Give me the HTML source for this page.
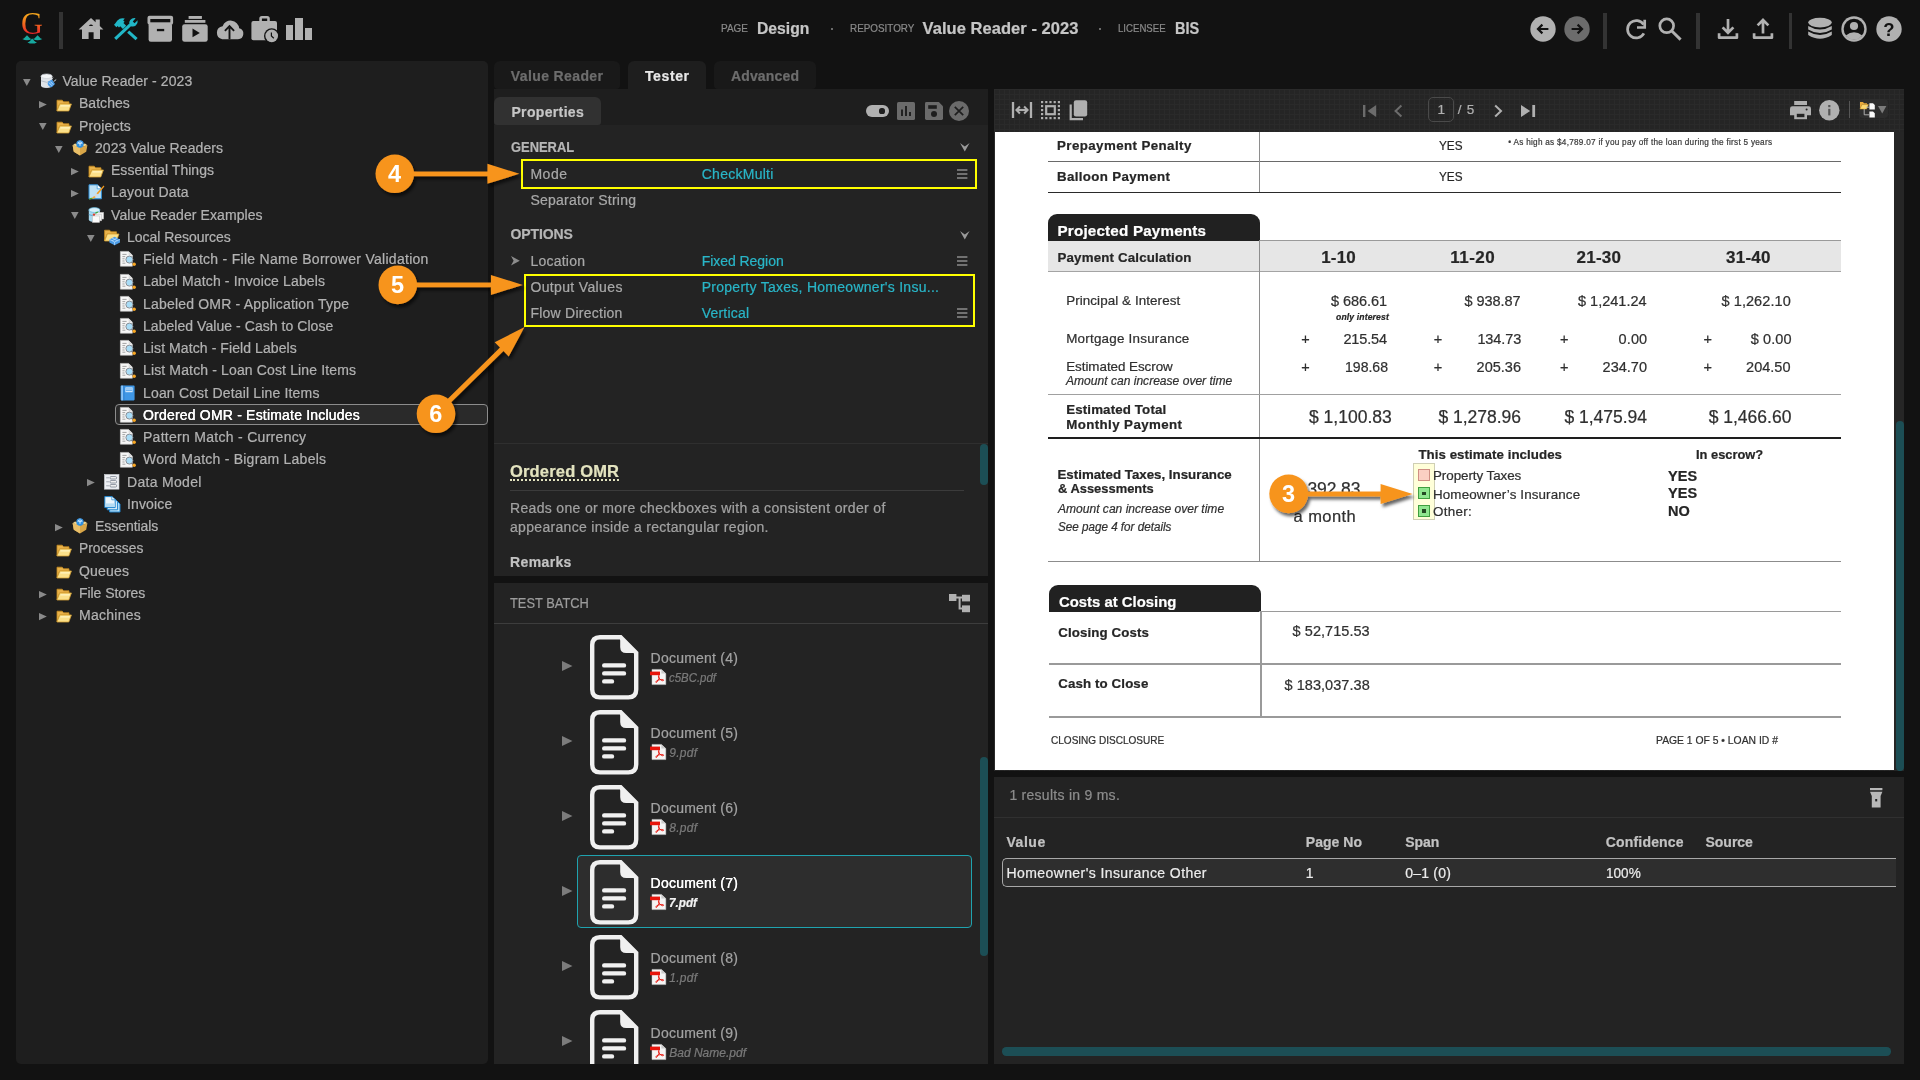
<!DOCTYPE html>
<html>
<head>
<meta charset="utf-8">
<title>Design</title>
<style>
*{box-sizing:border-box;margin:0;padding:0}
html,body{width:1920px;height:1080px;overflow:hidden;background:#121212;font-family:"Liberation Sans",sans-serif;color:#b4b4b4}
#root{position:relative;width:1920px;height:1080px;overflow:hidden;will-change:transform}
#root div,#root span,#root svg{position:absolute}
#root svg{overflow:visible}
.t{white-space:pre;line-height:1}
.t{-webkit-text-stroke:.22px currentColor}

</style>
</head>
<body>
<div id="root">
<span class="t" style="left:21.2px;top:8.5px;font-family:'Liberation Serif',serif;font-size:30.8px;line-height:1;-webkit-text-stroke:0;transform:scaleX(.985);transform-origin:0 0;background:linear-gradient(180deg,#f6a51c 20%,#f2631f 52%,#e8212b 84%);-webkit-background-clip:text;background-clip:text;color:transparent;">G</span>
<svg style="left:21px;top:34px;" width="23" height="10" viewBox="0 0 23 10"><g fill="#17a89f"><path d="M1.2 5.0 C3.8 4.6 4.6 2.2 6.0 1.2 C7.4 2.2 8.2 4.6 10.799999999999999 5.0 Q6.0 7.3999999999999995 1.2 5.0Z"/><path d="M11.8 5.0 C14.4 4.6 15.200000000000001 2.2 16.6 1.2 C18.0 2.2 18.8 4.6 21.4 5.0 Q16.6 7.3999999999999995 11.8 5.0Z"/><path d="M6.4 8.4 C9.0 8 9.8 5.6 11.2 4.6 C12.600000000000001 5.6 13.4 8 16.0 8.4 Q11.2 10.8 6.4 8.4Z"/></g></svg>
<div style="left:59px;top:12px;width:4px;height:37px;background:#333;"></div>
<svg style="left:78px;top:17px;" width="26" height="23" viewBox="0 0 26 23"><path fill="#b1b1b1" d="M13 1 L17.6 5.2 V2.4 H21.8 V9.1 L25.4 12.4 H22 V22 H15.6 V15.3 H10.6 V22 H4 V12.4 H0.6 Z"/><path fill="#121212" d="M10.8 8.9 Q13 6.3 15.2 8.9 Z"/></svg>
<svg style="left:113px;top:17px;" width="26" height="24" viewBox="0 0 26 24"><g fill="none" stroke="#21b7c7" stroke-width="3.1"><path d="M2.2 21.8 L17.4 7.6"/><path d="M15.2 14.6 L23.6 22.2"/></g><path fill="#21b7c7" d="M17.2 3.0 Q19.4 0.6 22.6 1.2 L19.8 4.4 L21.6 6.2 L24.6 3.2 Q25.2 6.6 22.8 8.6 Q20.6 10.2 17.8 9.2 L16.4 7.6 Q15.6 5 17.2 3.0Z"/><path fill="#21b7c7" d="M4.4 3.4 Q7.6 0.2 11.8 1.6 L10.2 3.4 L11.6 4.8 L10.4 6 L13.2 8.8 L10 12 L7.2 9.2 L6 10.4 L4.6 9 L3.4 10.2 L1 7.8 L2.2 6.6 Z"/></svg>
<svg style="left:147px;top:15px;" width="27" height="28" viewBox="0 0 27 28"><rect x="0.5" y="0.8" width="25.6" height="9" rx="2" fill="#b1b1b1"/><rect x="1.6" y="8" width="23.4" height="18.8" rx="2.2" fill="#b1b1b1"/><rect x="3.3" y="4" width="20" height="3.3" fill="#121212"/><rect x="9.9" y="13.9" width="7.3" height="2.3" fill="#121212"/></svg>
<svg style="left:182px;top:15px;" width="27" height="28" viewBox="0 0 27 28"><rect x="6.6" y="1" width="13.3" height="2.9" fill="#b1b1b1"/><rect x="2.8" y="5" width="20.6" height="2.8" fill="#b1b1b1"/><rect x="0.2" y="9.2" width="25.5" height="17.6" rx="2.4" fill="#b1b1b1"/><path d="M10.5 13.4 L17.8 17.9 L10.5 22.3Z" fill="#121212"/></svg>
<svg style="left:215px;top:18px;" width="30" height="22" viewBox="0 0 30 22"><path fill="#b1b1b1" d="M7.2 21.2 H23 A5.6 5.6 0 0 0 24.2 10.2 A8.6 8.6 0 0 0 7.6 8.2 A6.6 6.6 0 0 0 7.2 21.2Z"/><path d="M14.5 21.2 V9.8 M9.9 12.9 L14.5 8.2 L19.1 12.9" fill="none" stroke="#121212" stroke-width="1.9"/></svg>
<svg style="left:251px;top:15px;" width="29" height="29" viewBox="0 0 29 29"><path fill="none" stroke="#b1b1b1" stroke-width="2.6" d="M9.6 7 V3.6 Q9.6 2.3 10.9 2.3 H16.2 Q17.5 2.3 17.5 3.6 V7"/><rect x="0.4" y="6.1" width="25.6" height="19.1" rx="2" fill="#b1b1b1"/><circle cx="20.7" cy="20.9" r="7.7" fill="#121212"/><circle cx="20.7" cy="20.9" r="6.3" fill="#b1b1b1"/><path d="M20.4 17.4 V21 L22.8 23.2" fill="none" stroke="#121212" stroke-width="1.2"/></svg>
<div style="left:286px;top:25.2px;width:7.3px;height:15px;background:#b1b1b1;"></div>
<div style="left:295.2px;top:17.9px;width:7.5px;height:22.3px;background:#b1b1b1;"></div>
<div style="left:304.8px;top:28px;width:7.2px;height:12.2px;background:#b1b1b1;"></div>
<span class="t" style="left:721.00px;top:23.47px;font-size:11.5px;color:#8a8a8a;transform:scaleX(0.8679);transform-origin:0 0;">PAGE</span>
<span class="t" style="left:757.20px;top:19.83px;font-size:16.5px;color:#c6c6c6;font-weight:700;transform:scaleX(0.9525);transform-origin:0 0;">Design</span>
<div style="left:830.6px;top:27.6px;width:2.6px;height:2.6px;background:#8a8a8a;border-radius:50%"></div>
<span class="t" style="left:850.20px;top:23.47px;font-size:11.5px;color:#8a8a8a;transform:scaleX(0.8587);transform-origin:0 0;">REPOSITORY</span>
<span class="t" style="left:922.60px;top:19.83px;font-size:16.5px;color:#c6c6c6;font-weight:700;letter-spacing:0.044px;">Value Reader - 2023</span>
<div style="left:1098.8px;top:27.6px;width:2.6px;height:2.6px;background:#8a8a8a;border-radius:50%"></div>
<span class="t" style="left:1118.40px;top:23.47px;font-size:11.5px;color:#8a8a8a;transform:scaleX(0.8367);transform-origin:0 0;">LICENSEE</span>
<span class="t" style="left:1175.20px;top:19.83px;font-size:16.5px;color:#c6c6c6;font-weight:700;transform:scaleX(0.8795);transform-origin:0 0;">BIS</span>
<svg style="left:1529.9px;top:15.899999999999999px;" width="26" height="26" viewBox="0 0 26 26"><circle cx="13" cy="13" r="12.7" fill="#b1b1b1"/><path d="M18.4 13 H8.2 M12.4 8.6 L8 13 L12.4 17.4" fill="none" stroke="#121212" stroke-width="2.2"/></svg>
<svg style="left:1564.2px;top:15.899999999999999px;" width="26" height="26" viewBox="0 0 26 26"><circle cx="13" cy="13" r="12.7" fill="#6c6c6c"/><path d="M7.6 13 H17.8 M13.6 8.6 L18 13 L13.6 17.4" fill="none" stroke="#121212" stroke-width="2.2"/></svg>
<div style="left:1603.3px;top:12.5px;width:3.5px;height:36.5px;background:#333;"></div>
<svg style="left:1623.6px;top:17.8px;" width="24" height="24" viewBox="0 0 24 24"><path d="M19.6 6.6 A8.7 8.7 0 1 0 19.9 15.4" fill="none" stroke="#b1b1b1" stroke-width="2.7"/><path d="M20.7 1.8 V9.5 H13" fill="none" stroke="#b1b1b1" stroke-width="2.7"/></svg>
<svg style="left:1658px;top:17px;" width="25" height="24" viewBox="0 0 25 24"><circle cx="8.7" cy="8.8" r="6.9" fill="none" stroke="#b1b1b1" stroke-width="2.7"/><path d="M13.6 13.8 L22.6 22.6" stroke="#b1b1b1" stroke-width="2.9"/></svg>
<div style="left:1696px;top:12.5px;width:3.5px;height:36.5px;background:#333;"></div>
<svg style="left:1717px;top:18px;" width="23" height="22" viewBox="0 0 23 22"><g fill="none" stroke="#b1b1b1" stroke-width="2.7" stroke-linejoin="round"><path d="M11 1 V14.2 M5.6 9.4 L11 14.8 L16.4 9.4" stroke-linejoin="miter"/><path d="M2.1 15.2 V19.7 H19.9 V15.2"/></g></svg>
<svg style="left:1752px;top:18px;" width="23" height="22" viewBox="0 0 23 22"><g fill="none" stroke="#b1b1b1" stroke-width="2.7" stroke-linejoin="round"><path d="M11 15.6 V2 M5.6 7.4 L11 2 L16.4 7.4" stroke-linejoin="miter"/><path d="M2.1 15.2 V19.7 H19.9 V15.2"/></g></svg>
<div style="left:1788.6px;top:12.5px;width:3.5px;height:36.5px;background:#333;"></div>
<svg style="left:1807px;top:17px;" width="26" height="24" viewBox="0 0 26 24"><g fill="#b1b1b1"><ellipse cx="13" cy="5.6" rx="11.8" ry="4.8"/><path d="M1.2 9 Q13 16 24.8 9 V12.4 Q13 19.6 1.2 12.4Z"/><path d="M1.2 14.6 Q13 21.6 24.8 14.6 V18 Q13 25.6 1.2 18Z"/></g></svg>
<svg style="left:1841.4px;top:15.899999999999999px;" width="26" height="26" viewBox="0 0 26 26"><circle cx="13" cy="13" r="12.7" fill="#b1b1b1"/><circle cx="13" cy="13" r="10.3" fill="#121212"/><circle cx="13" cy="10" r="4.1" fill="#b1b1b1"/><path d="M4.8 19.4 Q13 13.2 21.2 19.4 Q17.6 23.6 13 23.6 Q8.4 23.6 4.8 19.4Z" fill="#b1b1b1"/></svg>
<svg style="left:1876px;top:15.899999999999999px;" width="26" height="26" viewBox="0 0 26 26"><circle cx="13" cy="13" r="12.7" fill="#b1b1b1"/><text x="13" y="19.6" text-anchor="middle" font-family="Liberation Sans" font-weight="700" font-size="18.5" fill="#121212">?</text></svg>
<div style="left:16px;top:61px;width:472px;height:1003px;background:#1e1e1e;border-radius:5px"></div>
<svg style="left:23.3px;top:78.8px;" width="9" height="8" viewBox="0 0 9 8"><path d="M0 0 H7.6 L3.8 7Z" fill="#8a8a8a"/></svg>
<svg style="left:39.8px;top:73.29999999999998px;" width="16.4" height="16.4" viewBox="0 0 16.4 16.4"><path d="M1 3.2 V12.6 Q1 15 6.6 15 Q12.2 15 12.2 12.6 V3.2Z" fill="#dfe3e8"/><ellipse cx="6.6" cy="3.2" rx="5.6" ry="2.3" fill="#f3f5f7" stroke="#c3c9d0" stroke-width=".6"/><path d="M1 7.8 Q6.6 10.8 12.2 7.8" fill="none" stroke="#aab2bb" stroke-width=".8"/><path d="M8.2 8.6 L12 6.6 L15 11 L11.8 14.2 Q8.6 14 7.6 11Z" fill="#4a9be6"/><path d="M9 9.6 L12 12.8 M10.4 8.6 L13.2 11.6" stroke="#bfe0ff" stroke-width=".9"/><path d="M13.6 8.6 L16.2 6.6 M11.6 6.4 L13 4.6 M7.8 13.4 L6 15" stroke="#cfd4da" stroke-width="1"/></svg>
<span class="t" style="left:62.40px;top:74.05px;font-size:14px;color:#b2b2b2;letter-spacing:0.09px;">Value Reader - 2023</span>
<svg style="left:38.9px;top:101.14999999999999px;" width="9" height="9" viewBox="0 0 9 9"><path d="M0 0 L7.8 3.6 L0 7.2Z" fill="#8a8a8a"/></svg>
<svg style="left:55.8px;top:96.54999999999998px;" width="16.4" height="16.4" viewBox="0 0 16.4 16.4"><path d="M1 3.2 H6.2 L7.6 4.8 H13 V7 H3.6 L1 13.6Z" fill="#e9b24a" stroke="#c58a1e" stroke-width=".8"/><path d="M3.8 7 H15.4 L12.8 14 H1Z" fill="#fbe08a" stroke="#d7a233" stroke-width=".8"/><path d="M4.6 8.2 H14 L13.6 9.4 H4.2Z" fill="#fff4c2"/></svg>
<span class="t" style="left:79.00px;top:96.30px;font-size:14px;color:#b2b2b2;letter-spacing:0.034px;">Batches</span>
<svg style="left:39.3px;top:123.3px;" width="9" height="8" viewBox="0 0 9 8"><path d="M0 0 H7.6 L3.8 7Z" fill="#8a8a8a"/></svg>
<svg style="left:55.8px;top:118.79999999999998px;" width="16.4" height="16.4" viewBox="0 0 16.4 16.4"><path d="M1 3.2 H6.2 L7.6 4.8 H13 V7 H3.6 L1 13.6Z" fill="#e9b24a" stroke="#c58a1e" stroke-width=".8"/><path d="M3.8 7 H15.4 L12.8 14 H1Z" fill="#fbe08a" stroke="#d7a233" stroke-width=".8"/><path d="M4.6 8.2 H14 L13.6 9.4 H4.2Z" fill="#fff4c2"/></svg>
<span class="t" style="left:79.00px;top:118.55px;font-size:14px;color:#b2b2b2;letter-spacing:0.175px;">Projects</span>
<svg style="left:55.3px;top:145.54999999999998px;" width="9" height="8" viewBox="0 0 9 8"><path d="M0 0 H7.6 L3.8 7Z" fill="#8a8a8a"/></svg>
<svg style="left:71.8px;top:139.64999999999998px;" width="16.4" height="16.4" viewBox="0 0 16.4 16.4"><path d="M0.6 5.2 L8 7.4 L15.4 5.2 L14.2 11.8 L8 15.4 L1.8 11.8Z" fill="#d9a648"/><path d="M8 7.4 V15.4 L1.8 11.8 L0.6 5.2Z" fill="#e9bf68"/><path d="M0.6 5.2 L3 3.4 L8 5 L13 3.4 L15.4 5.2 L8 7.4Z" fill="#f3d48a"/><circle cx="8" cy="4" r="3.7" fill="#2f8fe0"/><path d="M5.4 3.2 H10.6 M6.2 1.8 Q8 6.6 9.8 1.8 M8 .6 V6" stroke="#d8efff" stroke-width=".8" fill="none"/></svg>
<span class="t" style="left:95.00px;top:140.80px;font-size:14px;color:#b2b2b2;letter-spacing:0.082px;">2023 Value Readers</span>
<svg style="left:70.9px;top:167.9px;" width="9" height="9" viewBox="0 0 9 9"><path d="M0 0 L7.8 3.6 L0 7.2Z" fill="#8a8a8a"/></svg>
<svg style="left:87.8px;top:163.29999999999998px;" width="16.4" height="16.4" viewBox="0 0 16.4 16.4"><path d="M1 3.2 H6.2 L7.6 4.8 H13 V7 H3.6 L1 13.6Z" fill="#e9b24a" stroke="#c58a1e" stroke-width=".8"/><path d="M3.8 7 H15.4 L12.8 14 H1Z" fill="#fbe08a" stroke="#d7a233" stroke-width=".8"/><path d="M4.6 8.2 H14 L13.6 9.4 H4.2Z" fill="#fff4c2"/></svg>
<span class="t" style="left:111.00px;top:163.05px;font-size:14px;color:#b2b2b2;letter-spacing:0.035px;">Essential Things</span>
<svg style="left:70.9px;top:190.15px;" width="9" height="9" viewBox="0 0 9 9"><path d="M0 0 L7.8 3.6 L0 7.2Z" fill="#8a8a8a"/></svg>
<svg style="left:87.8px;top:184.14999999999998px;" width="16.4" height="16.4" viewBox="0 0 16.4 16.4"><path d="M1 .8 H9.4 L13.4 4.6 V14.8 H1Z" fill="#bfe2f6" stroke="#2f8fd6" stroke-width="1"/><path d="M9.2 .8 V4.8 H13.4" fill="#fff" stroke="#2f8fd6" stroke-width=".7"/><path d="M15.6 1.6 L16.4 2.6 L9.8 10.4 L8.4 9.4Z" fill="#f39a1d"/><path d="M8.6 9.2 L10 10.4 L7.6 13.2 L6.2 12.2Z" fill="#d8d8de"/><path d="M6.2 12 L7.8 13.2 Q5 15.4 1 15.2 Q4.6 14 6.2 12Z" fill="#f7a93b"/><path d="M.8 15.4 Q3 12.6 5 14.6 Q3 15.6 .8 15.4Z" fill="#4caf2a"/></svg>
<span class="t" style="left:111.00px;top:185.30px;font-size:14px;color:#b2b2b2;letter-spacing:0.21px;">Layout Data</span>
<svg style="left:71.3px;top:212.29999999999998px;" width="9" height="8" viewBox="0 0 9 8"><path d="M0 0 H7.6 L3.8 7Z" fill="#8a8a8a"/></svg>
<svg style="left:87.8px;top:206.6px;" width="16.4" height="16.4" viewBox="0 0 16.4 16.4"><path d="M.8 3 V12.6 Q.8 15 6.4 15 Q12 15 12 12.6 V3Z" fill="#a9d8ee"/><ellipse cx="6.4" cy="3" rx="5.6" ry="2.4" fill="#d9f1fb" stroke="#5db4dc" stroke-width=".7"/><path d="M.8 7.6 Q6.4 10.6 12 7.6" fill="none" stroke="#4aa4d0" stroke-width=".8"/><rect x="8.6" y="5.4" width="7" height="6.6" fill="#f4f4f4" stroke="#c4c4c4" stroke-width=".6"/><rect x="6.6" y="7.2" width="7" height="6.6" fill="#f4f4f4" stroke="#c4c4c4" stroke-width=".6"/><rect x="4.6" y="9" width="7" height="6.4" fill="#fbfbfb" stroke="#c4c4c4" stroke-width=".6"/><circle cx="6" cy="7.6" r="1.2" fill="#e0412f"/><path d="M7.4 6.4 Q8.6 5 10 5.4" stroke="#3fae3c" stroke-width="1.1" fill="none"/></svg>
<span class="t" style="left:111.00px;top:207.55px;font-size:14px;color:#b2b2b2;letter-spacing:0.083px;">Value Reader Examples</span>
<svg style="left:87.3px;top:234.54999999999998px;" width="9" height="8" viewBox="0 0 9 8"><path d="M0 0 H7.6 L3.8 7Z" fill="#8a8a8a"/></svg>
<svg style="left:103.8px;top:228.64999999999998px;" width="16.4" height="16.4" viewBox="0 0 16.4 16.4"><path d="M.6 1.2 H5.6 L7 2.8 H12.6 V5 H3.2 L.6 11.8Z" fill="#e9b24a" stroke="#c58a1e" stroke-width=".8"/><path d="M3.4 5 H15 L12.4 12 H.6Z" fill="#fbe08a" stroke="#d7a233" stroke-width=".8"/><path d="M5.4 10.4 L10.6 7.8 L16 10.4 V13.6 L10.6 16.2 L5.4 13.6Z" fill="#4a9be6"/><path d="M5.4 10.4 L10.6 13 L16 10.4 M10.6 13 V16.2 M8 9 L13.4 11.8 M13.2 9 L8 11.8" stroke="#bfe0ff" stroke-width=".7" fill="none"/></svg>
<span class="t" style="left:127.00px;top:229.80px;font-size:14px;color:#b2b2b2;letter-spacing:-0.034px;">Local Resources</span>
<svg style="left:119.8px;top:251.3px;" width="16.4" height="16.4" viewBox="0 0 16.4 16.4"><path d="M.4 .4 H8.6 L12.4 4.2 V15.2 H.4Z" fill="#f6f6f6" stroke="#d0d0d0" stroke-width=".6"/><path d="M8.6 .4 V4.2 H12.4Z" fill="#dcdcdc"/><path d="M2.4 3.4 H6.6 M2.4 5.6 H5.2 M2.4 7.8 H4.6 M2.4 10 H4.6 M2.4 12.2 H5.4" stroke="#9a9a9a" stroke-width=".9"/><circle cx="9.4" cy="8.6" r="3.5" fill="#a9dcf6" stroke="#8a8f96" stroke-width="1"/><path d="M11.8 11.2 L13.6 13" stroke="#7a7a7a" stroke-width="1.4"/><circle cx="14.2" cy="13.2" r="1.7" fill="#f7a623"/></svg>
<span class="t" style="left:143.00px;top:252.05px;font-size:14px;color:#b2b2b2;letter-spacing:0.28px;">Field Match - File Name Borrower Validation</span>
<svg style="left:119.8px;top:273.55000000000007px;" width="16.4" height="16.4" viewBox="0 0 16.4 16.4"><path d="M.4 .4 H8.6 L12.4 4.2 V15.2 H.4Z" fill="#f6f6f6" stroke="#d0d0d0" stroke-width=".6"/><path d="M8.6 .4 V4.2 H12.4Z" fill="#dcdcdc"/><path d="M2.4 3.4 H6.6 M2.4 5.6 H5.2 M2.4 7.8 H4.6 M2.4 10 H4.6 M2.4 12.2 H5.4" stroke="#9a9a9a" stroke-width=".9"/><circle cx="9.4" cy="8.6" r="3.5" fill="#a9dcf6" stroke="#8a8f96" stroke-width="1"/><path d="M11.8 11.2 L13.6 13" stroke="#7a7a7a" stroke-width="1.4"/><circle cx="14.2" cy="13.2" r="1.7" fill="#f7a623"/></svg>
<span class="t" style="left:143.00px;top:274.30px;font-size:14px;color:#b2b2b2;letter-spacing:0.14px;">Label Match - Invoice Labels</span>
<svg style="left:119.8px;top:295.80000000000007px;" width="16.4" height="16.4" viewBox="0 0 16.4 16.4"><path d="M.4 .4 H8.6 L12.4 4.2 V15.2 H.4Z" fill="#f6f6f6" stroke="#d0d0d0" stroke-width=".6"/><path d="M8.6 .4 V4.2 H12.4Z" fill="#dcdcdc"/><path d="M2.4 3.4 H6.6 M2.4 5.6 H5.2 M2.4 7.8 H4.6 M2.4 10 H4.6 M2.4 12.2 H5.4" stroke="#9a9a9a" stroke-width=".9"/><circle cx="9.4" cy="8.6" r="3.5" fill="#a9dcf6" stroke="#8a8f96" stroke-width="1"/><path d="M11.8 11.2 L13.6 13" stroke="#7a7a7a" stroke-width="1.4"/><circle cx="14.2" cy="13.2" r="1.7" fill="#f7a623"/></svg>
<span class="t" style="left:143.00px;top:296.55px;font-size:14px;color:#b2b2b2;letter-spacing:0.189px;">Labeled OMR - Application Type</span>
<svg style="left:119.8px;top:318.05000000000007px;" width="16.4" height="16.4" viewBox="0 0 16.4 16.4"><path d="M.4 .4 H8.6 L12.4 4.2 V15.2 H.4Z" fill="#f6f6f6" stroke="#d0d0d0" stroke-width=".6"/><path d="M8.6 .4 V4.2 H12.4Z" fill="#dcdcdc"/><path d="M2.4 3.4 H6.6 M2.4 5.6 H5.2 M2.4 7.8 H4.6 M2.4 10 H4.6 M2.4 12.2 H5.4" stroke="#9a9a9a" stroke-width=".9"/><circle cx="9.4" cy="8.6" r="3.5" fill="#a9dcf6" stroke="#8a8f96" stroke-width="1"/><path d="M11.8 11.2 L13.6 13" stroke="#7a7a7a" stroke-width="1.4"/><circle cx="14.2" cy="13.2" r="1.7" fill="#f7a623"/></svg>
<span class="t" style="left:143.00px;top:318.80px;font-size:14px;color:#b2b2b2;letter-spacing:0.051px;">Labeled Value - Cash to Close</span>
<svg style="left:119.8px;top:340.30000000000007px;" width="16.4" height="16.4" viewBox="0 0 16.4 16.4"><path d="M.4 .4 H8.6 L12.4 4.2 V15.2 H.4Z" fill="#f6f6f6" stroke="#d0d0d0" stroke-width=".6"/><path d="M8.6 .4 V4.2 H12.4Z" fill="#dcdcdc"/><path d="M2.4 3.4 H6.6 M2.4 5.6 H5.2 M2.4 7.8 H4.6 M2.4 10 H4.6 M2.4 12.2 H5.4" stroke="#9a9a9a" stroke-width=".9"/><circle cx="9.4" cy="8.6" r="3.5" fill="#a9dcf6" stroke="#8a8f96" stroke-width="1"/><path d="M11.8 11.2 L13.6 13" stroke="#7a7a7a" stroke-width="1.4"/><circle cx="14.2" cy="13.2" r="1.7" fill="#f7a623"/></svg>
<span class="t" style="left:143.00px;top:341.05px;font-size:14px;color:#b2b2b2;letter-spacing:0.086px;">List Match - Field Labels</span>
<svg style="left:119.8px;top:362.55000000000007px;" width="16.4" height="16.4" viewBox="0 0 16.4 16.4"><path d="M.4 .4 H8.6 L12.4 4.2 V15.2 H.4Z" fill="#f6f6f6" stroke="#d0d0d0" stroke-width=".6"/><path d="M8.6 .4 V4.2 H12.4Z" fill="#dcdcdc"/><path d="M2.4 3.4 H6.6 M2.4 5.6 H5.2 M2.4 7.8 H4.6 M2.4 10 H4.6 M2.4 12.2 H5.4" stroke="#9a9a9a" stroke-width=".9"/><circle cx="9.4" cy="8.6" r="3.5" fill="#a9dcf6" stroke="#8a8f96" stroke-width="1"/><path d="M11.8 11.2 L13.6 13" stroke="#7a7a7a" stroke-width="1.4"/><circle cx="14.2" cy="13.2" r="1.7" fill="#f7a623"/></svg>
<span class="t" style="left:143.00px;top:363.30px;font-size:14px;color:#b2b2b2;letter-spacing:0.139px;">List Match - Loan Cost Line Items</span>
<svg style="left:119.8px;top:384.6px;" width="16.4" height="16.4" viewBox="0 0 16.4 16.4"><rect x=".6" y=".6" width="14" height="14.8" rx=".8" fill="#3f97e6"/><rect x="1.4" y=".6" width="1.4" height="14.8" fill="#9fd0fb"/><rect x="3.6" y=".6" width=".7" height="14.8" fill="#2a78c8"/><rect x="5.4" y="2.4" width="7.2" height="4.8" fill="#d9ecfd"/><path d="M6 4 H12 M6 5.6 H12" stroke="#3f97e6" stroke-width=".8"/></svg>
<span class="t" style="left:143.00px;top:385.55px;font-size:14px;color:#b2b2b2;letter-spacing:0.17px;">Loan Cost Detail Line Items</span>
<div style="left:115px;top:404px;width:373px;height:21px;background:#2a2a2a;border:1px solid #8c8c8c;border-radius:4px"></div>
<svg style="left:119.8px;top:407.05000000000007px;" width="16.4" height="16.4" viewBox="0 0 16.4 16.4"><path d="M.4 .4 H8.6 L12.4 4.2 V15.2 H.4Z" fill="#f6f6f6" stroke="#d0d0d0" stroke-width=".6"/><path d="M8.6 .4 V4.2 H12.4Z" fill="#dcdcdc"/><path d="M2.4 3.4 H6.6 M2.4 5.6 H5.2 M2.4 7.8 H4.6 M2.4 10 H4.6 M2.4 12.2 H5.4" stroke="#9a9a9a" stroke-width=".9"/><circle cx="9.4" cy="8.6" r="3.5" fill="#a9dcf6" stroke="#8a8f96" stroke-width="1"/><path d="M11.8 11.2 L13.6 13" stroke="#7a7a7a" stroke-width="1.4"/><circle cx="14.2" cy="13.2" r="1.7" fill="#f7a623"/></svg>
<span class="t" style="left:143.00px;top:407.80px;font-size:14px;color:#ffffff;letter-spacing:0.198px;text-shadow:0 0 .6px #fff;">Ordered OMR - Estimate Includes</span>
<svg style="left:119.8px;top:429.30000000000007px;" width="16.4" height="16.4" viewBox="0 0 16.4 16.4"><path d="M.4 .4 H8.6 L12.4 4.2 V15.2 H.4Z" fill="#f6f6f6" stroke="#d0d0d0" stroke-width=".6"/><path d="M8.6 .4 V4.2 H12.4Z" fill="#dcdcdc"/><path d="M2.4 3.4 H6.6 M2.4 5.6 H5.2 M2.4 7.8 H4.6 M2.4 10 H4.6 M2.4 12.2 H5.4" stroke="#9a9a9a" stroke-width=".9"/><circle cx="9.4" cy="8.6" r="3.5" fill="#a9dcf6" stroke="#8a8f96" stroke-width="1"/><path d="M11.8 11.2 L13.6 13" stroke="#7a7a7a" stroke-width="1.4"/><circle cx="14.2" cy="13.2" r="1.7" fill="#f7a623"/></svg>
<span class="t" style="left:143.00px;top:430.05px;font-size:14px;color:#b2b2b2;letter-spacing:0.287px;">Pattern Match - Currency</span>
<svg style="left:119.8px;top:451.55000000000007px;" width="16.4" height="16.4" viewBox="0 0 16.4 16.4"><path d="M.4 .4 H8.6 L12.4 4.2 V15.2 H.4Z" fill="#f6f6f6" stroke="#d0d0d0" stroke-width=".6"/><path d="M8.6 .4 V4.2 H12.4Z" fill="#dcdcdc"/><path d="M2.4 3.4 H6.6 M2.4 5.6 H5.2 M2.4 7.8 H4.6 M2.4 10 H4.6 M2.4 12.2 H5.4" stroke="#9a9a9a" stroke-width=".9"/><circle cx="9.4" cy="8.6" r="3.5" fill="#a9dcf6" stroke="#8a8f96" stroke-width="1"/><path d="M11.8 11.2 L13.6 13" stroke="#7a7a7a" stroke-width="1.4"/><circle cx="14.2" cy="13.2" r="1.7" fill="#f7a623"/></svg>
<span class="t" style="left:143.00px;top:452.30px;font-size:14px;color:#b2b2b2;letter-spacing:0.234px;">Word Match - Bigram Labels</span>
<svg style="left:86.9px;top:479.40000000000003px;" width="9" height="9" viewBox="0 0 9 9"><path d="M0 0 L7.8 3.6 L0 7.2Z" fill="#8a8a8a"/></svg>
<svg style="left:103.8px;top:473.6px;" width="16.4" height="16.4" viewBox="0 0 16.4 16.4"><rect x=".4" y=".4" width="14.6" height="14.8" fill="#eef0f4" stroke="#c9ccd3" stroke-width=".6"/><g fill="#fafafa" stroke="#7f8794" stroke-width=".9"><rect x="6" y="2.6" width="6.6" height="2.4" rx="1"/><rect x="6" y="6.6" width="6.6" height="2.4" rx="1"/><rect x="6" y="10.6" width="6.6" height="2.4" rx="1"/></g><path d="M2.2 3.8 H5 M2.2 7.8 H5 M2.2 11.8 H5" stroke="#9aa0aa" stroke-width=".9"/></svg>
<span class="t" style="left:127.00px;top:474.55px;font-size:14px;color:#b2b2b2;letter-spacing:0.312px;">Data Model</span>
<svg style="left:103.8px;top:495.85px;" width="16.4" height="16.4" viewBox="0 0 16.4 16.4"><g stroke="#1f86d0" stroke-width="1"><path d="M5.6 5 H13 L16 8 V16 H5.6Z" fill="#bfe2f6"/><path d="M3.2 2.8 H10.6 L13.6 5.8 V13.8 H3.2Z" fill="#d6ecf9"/><path d="M.8 .6 H8 L11.2 3.6 V11.6 H.8Z" fill="#eaf5fc"/></g><path d="M7.8 .8 V3.8 H11" fill="#fff" stroke="#1f86d0" stroke-width=".7"/><path d="M1.4 7.4 H10.6 V11 H1.4Z" fill="#b5dcf3"/></svg>
<span class="t" style="left:127.00px;top:496.80px;font-size:14px;color:#b2b2b2;letter-spacing:0.14px;">Invoice</span>
<svg style="left:54.9px;top:523.9px;" width="9" height="9" viewBox="0 0 9 9"><path d="M0 0 L7.8 3.6 L0 7.2Z" fill="#8a8a8a"/></svg>
<svg style="left:71.8px;top:517.9000000000001px;" width="16.4" height="16.4" viewBox="0 0 16.4 16.4"><path d="M0.6 5.2 L8 7.4 L15.4 5.2 L14.2 11.8 L8 15.4 L1.8 11.8Z" fill="#d9a648"/><path d="M8 7.4 V15.4 L1.8 11.8 L0.6 5.2Z" fill="#e9bf68"/><path d="M0.6 5.2 L3 3.4 L8 5 L13 3.4 L15.4 5.2 L8 7.4Z" fill="#f3d48a"/><circle cx="8" cy="4" r="3.7" fill="#2f8fe0"/><path d="M5.4 3.2 H10.6 M6.2 1.8 Q8 6.6 9.8 1.8 M8 .6 V6" stroke="#d8efff" stroke-width=".8" fill="none"/></svg>
<span class="t" style="left:95.00px;top:519.05px;font-size:14px;color:#b2b2b2;letter-spacing:-0.057px;">Essentials</span>
<svg style="left:55.8px;top:541.5500000000001px;" width="16.4" height="16.4" viewBox="0 0 16.4 16.4"><path d="M1 3.2 H6.2 L7.6 4.8 H13 V7 H3.6 L1 13.6Z" fill="#e9b24a" stroke="#c58a1e" stroke-width=".8"/><path d="M3.8 7 H15.4 L12.8 14 H1Z" fill="#fbe08a" stroke="#d7a233" stroke-width=".8"/><path d="M4.6 8.2 H14 L13.6 9.4 H4.2Z" fill="#fff4c2"/></svg>
<span class="t" style="left:79.00px;top:541.30px;font-size:14px;color:#b2b2b2;transform:scaleX(0.9838);transform-origin:0 0;">Processes</span>
<svg style="left:55.8px;top:563.8000000000001px;" width="16.4" height="16.4" viewBox="0 0 16.4 16.4"><path d="M1 3.2 H6.2 L7.6 4.8 H13 V7 H3.6 L1 13.6Z" fill="#e9b24a" stroke="#c58a1e" stroke-width=".8"/><path d="M3.8 7 H15.4 L12.8 14 H1Z" fill="#fbe08a" stroke="#d7a233" stroke-width=".8"/><path d="M4.6 8.2 H14 L13.6 9.4 H4.2Z" fill="#fff4c2"/></svg>
<span class="t" style="left:79.00px;top:563.55px;font-size:14px;color:#b2b2b2;letter-spacing:0.191px;">Queues</span>
<svg style="left:38.9px;top:590.65px;" width="9" height="9" viewBox="0 0 9 9"><path d="M0 0 L7.8 3.6 L0 7.2Z" fill="#8a8a8a"/></svg>
<svg style="left:55.8px;top:586.0500000000001px;" width="16.4" height="16.4" viewBox="0 0 16.4 16.4"><path d="M1 3.2 H6.2 L7.6 4.8 H13 V7 H3.6 L1 13.6Z" fill="#e9b24a" stroke="#c58a1e" stroke-width=".8"/><path d="M3.8 7 H15.4 L12.8 14 H1Z" fill="#fbe08a" stroke="#d7a233" stroke-width=".8"/><path d="M4.6 8.2 H14 L13.6 9.4 H4.2Z" fill="#fff4c2"/></svg>
<span class="t" style="left:79.00px;top:585.80px;font-size:14px;color:#b2b2b2;letter-spacing:-0.062px;">File Stores</span>
<svg style="left:38.9px;top:612.9px;" width="9" height="9" viewBox="0 0 9 9"><path d="M0 0 L7.8 3.6 L0 7.2Z" fill="#8a8a8a"/></svg>
<svg style="left:55.8px;top:608.3000000000001px;" width="16.4" height="16.4" viewBox="0 0 16.4 16.4"><path d="M1 3.2 H6.2 L7.6 4.8 H13 V7 H3.6 L1 13.6Z" fill="#e9b24a" stroke="#c58a1e" stroke-width=".8"/><path d="M3.8 7 H15.4 L12.8 14 H1Z" fill="#fbe08a" stroke="#d7a233" stroke-width=".8"/><path d="M4.6 8.2 H14 L13.6 9.4 H4.2Z" fill="#fff4c2"/></svg>
<span class="t" style="left:79.00px;top:608.05px;font-size:14px;color:#b2b2b2;letter-spacing:0.268px;">Machines</span>
<div style="left:494px;top:61px;width:126px;height:28px;background:#191919;border-radius:6px 6px 4px 4px"></div>
<div style="left:628px;top:61px;width:78px;height:28px;background:#1e1e1e;border-radius:6px 6px 0 0"></div>
<div style="left:714px;top:61px;width:102px;height:28px;background:#191919;border-radius:6px 6px 4px 4px"></div>
<span class="t" style="left:510.80px;top:68.95px;font-size:14px;color:#6d6d6d;font-weight:700;letter-spacing:0.387px;">Value Reader</span>
<span class="t" style="left:645.00px;top:68.95px;font-size:14px;color:#e8e8e8;font-weight:700;letter-spacing:0.603px;">Tester</span>
<span class="t" style="left:730.90px;top:68.95px;font-size:14px;color:#6d6d6d;font-weight:700;letter-spacing:0.168px;">Advanced</span>
<div style="left:494px;top:89px;width:494px;height:487px;background:#1e1e1e;"></div>
<div style="left:494px;top:97px;width:107px;height:27.6px;background:#313131;border-radius:6px 6px 3px 3px"></div>
<span class="t" style="left:511.40px;top:105.25px;font-size:14px;color:#c6c6c6;font-weight:700;letter-spacing:0.35px;">Properties</span>
<div style="left:866px;top:104.8px;width:22.8px;height:12.2px;background:#b0b0b0;border-radius:6.1px"></div>
<div style="left:879.4px;top:108.4px;width:5.2px;height:5.2px;background:#1e1e1e;border-radius:50%"></div>
<svg style="left:897px;top:102px;" width="18" height="18" viewBox="0 0 18 18"><rect width="18" height="18" rx="1.6" fill="#6b6b6b"/><path d="M5 7.4 V14 M9 4 V14 M13 10 V14" stroke="#1e1e1e" stroke-width="1.9"/></svg>
<svg style="left:925.4px;top:102px;" width="18" height="18" viewBox="0 0 18 18"><path d="M1.4 0 H13.8 L18 4.2 V16.6 Q18 18 16.6 18 H1.4 Q0 18 0 16.6 V1.4 Q0 0 1.4 0Z" fill="#6b6b6b"/><rect x="3.2" y="3.2" width="8.6" height="3.6" fill="#1e1e1e"/><circle cx="9" cy="12" r="3" fill="#1e1e1e"/></svg>
<svg style="left:949.4px;top:101px;" width="20" height="20" viewBox="0 0 20 20"><circle cx="10" cy="10" r="10" fill="#6b6b6b"/><path d="M5.8 5.8 L14.2 14.2 M14.2 5.8 L5.8 14.2" stroke="#1e1e1e" stroke-width="1.7"/></svg>
<div style="left:494px;top:125px;width:494px;height:451px;background:#232323;"></div>
<span class="t" style="left:510.60px;top:139.95px;font-size:14px;color:#b6b6b6;font-weight:700;transform:scaleX(0.9218);transform-origin:0 0;">GENERAL</span>
<svg style="left:960.4px;top:143.4px;" width="10" height="9" viewBox="0 0 10 9"><path d="M0 0 L4.8 3.4 L9.6 0 L4.8 8.4Z" fill="#9a9a9a"/></svg>
<span class="t" style="left:530.40px;top:166.75px;font-size:14px;color:#a8a8a8;letter-spacing:0.523px;">Mode</span>
<span class="t" style="left:701.70px;top:166.75px;font-size:14px;color:#29b5c7;letter-spacing:0.272px;">CheckMulti</span>
<svg style="left:956.8px;top:169px;" width="11" height="10" viewBox="0 0 11 10"><path d="M0 1 H10.4 M0 5 H10.4 M0 9 H10.4" stroke="#8c8c8c" stroke-width="1.3"/></svg>
<span class="t" style="left:530.40px;top:193.05px;font-size:14px;color:#a8a8a8;letter-spacing:0.243px;">Separator String</span>
<span class="t" style="left:510.60px;top:227.05px;font-size:14px;color:#b6b6b6;font-weight:700;letter-spacing:-0.136px;">OPTIONS</span>
<svg style="left:960.4px;top:230.6px;" width="10" height="9" viewBox="0 0 10 9"><path d="M0 0 L4.8 3.4 L9.6 0 L4.8 8.4Z" fill="#9a9a9a"/></svg>
<svg style="left:511px;top:256.4px;" width="9" height="10" viewBox="0 0 9 10"><path d="M0 0 L8.8 4.7 L0 9.4 L2.6 4.7Z" fill="#8c8c8c"/></svg>
<span class="t" style="left:530.40px;top:253.85px;font-size:14px;color:#a8a8a8;letter-spacing:0.238px;">Location</span>
<span class="t" style="left:701.70px;top:253.85px;font-size:14px;color:#29b5c7;letter-spacing:-0.045px;">Fixed Region</span>
<svg style="left:956.8px;top:256px;" width="11" height="10" viewBox="0 0 11 10"><path d="M0 1 H10.4 M0 5 H10.4 M0 9 H10.4" stroke="#8c8c8c" stroke-width="1.3"/></svg>
<span class="t" style="left:530.40px;top:279.65px;font-size:14px;color:#a8a8a8;letter-spacing:0.359px;">Output Values</span>
<span class="t" style="left:701.70px;top:279.65px;font-size:14px;color:#29b5c7;letter-spacing:0.271px;">Property Taxes, Homeowner&#x27;s Insu...</span>
<span class="t" style="left:530.40px;top:305.85px;font-size:14px;color:#a8a8a8;letter-spacing:0.254px;">Flow Direction</span>
<span class="t" style="left:701.70px;top:305.85px;font-size:14px;color:#29b5c7;letter-spacing:0.211px;">Vertical</span>
<svg style="left:956.8px;top:308.2px;" width="11" height="10" viewBox="0 0 11 10"><path d="M0 1 H10.4 M0 5 H10.4 M0 9 H10.4" stroke="#8c8c8c" stroke-width="1.3"/></svg>
<div style="left:521px;top:159px;width:456px;height:30px;border:2px solid #ffff00"></div>
<div style="left:524px;top:273.5px;width:451px;height:53.5px;border:2px solid #ffff00"></div>
<div style="left:494px;top:443px;width:494px;height:1px;background:#2f2f2f;"></div>
<div style="left:980px;top:444px;width:8px;height:41px;background:#1c4e55;border-radius:4px"></div>
<span class="t" style="left:510.00px;top:463.03px;font-size:16.5px;color:#e3e3bf;font-weight:700;letter-spacing:0.172px;">Ordered OMR</span>
<div style="left:510px;top:479.4px;width:109px;height:0px;border-top:2px dotted #e3e3bf"></div>
<div style="left:510px;top:490.2px;width:454px;height:1px;background:#3b3b3b;"></div>
<span class="t" style="left:510.00px;top:500.85px;font-size:14px;color:#a2a2a2;letter-spacing:0.335px;">Reads one or more checkboxes with a consistent order of</span>
<span class="t" style="left:510.00px;top:519.65px;font-size:14px;color:#a2a2a2;letter-spacing:0.31px;">appearance inside a rectangular region.</span>
<span class="t" style="left:510.00px;top:555.15px;font-size:14px;color:#c2c2c2;font-weight:700;letter-spacing:0.374px;">Remarks</span>
<div style="left:494px;top:583px;width:494px;height:481px;background:#232323;"></div>
<span class="t" style="left:510.00px;top:596.15px;font-size:14px;color:#9c9c9c;transform:scaleX(0.9181);transform-origin:0 0;">TEST BATCH</span>
<svg style="left:949px;top:593.6px;" width="22" height="19" viewBox="0 0 22 19"><g fill="#b0b0b0"><rect x="0" y="0" width="7.4" height="7"/><rect x="13" y=".8" width="8" height="6.6"/><rect x="13" y="11.4" width="8" height="6.8"/><path d="M7 2.6 H13 V4.6 H7Z M9.6 4 H11.6 V15.6 H9.6Z M10 13.6 H13.4 V15.6 H10Z"/></g></svg>
<div style="left:494px;top:622.6px;width:494px;height:1px;background:#3d3d3d;"></div>
<div style="left:494px;top:583px;width:486px;height:481px;overflow:hidden"><svg style="left:67.79999999999995px;top:77.59999999999995px;" width="11" height="11" viewBox="0 0 11 11"><path d="M0 0 L10.5 5 L0 10Z" fill="#7c7c7c"/></svg><svg style="left:95.79999999999995px;top:51.59999999999995px;" width="49" height="65" viewBox="0 0 49 65"><path d="M10 2.2 H30.6 L46.2 17.8 V54.6 Q46.2 62.4 38.4 62.4 H10 Q2.2 62.4 2.2 54.6 V10 Q2.2 2.2 10 2.2Z" fill="none" stroke="#f0f0f0" stroke-width="4.4"/><path d="M30.2 2.2 V12 Q30.2 18 36.2 18 H46.2Z" fill="#f0f0f0"/><g stroke="#f0f0f0" stroke-width="4.4" stroke-linecap="round"><path d="M14.2 30.4 H34 M14.2 38.4 H34 M14.2 46.4 H22"/></g></svg><span class="t" style="left:156.60px;top:67.95px;font-size:14px;color:#a2a2a2;letter-spacing:0.226px;">Document (4)</span><svg style="left:156px;top:85.79999999999995px;" width="17" height="16" viewBox="0 0 17 16"><path d="M2 .4 H11.4 L15.8 4.6 V15.6 H2Z" fill="#f4f4f4" stroke="#cfcfcf" stroke-width=".5"/><path d="M11.4 .4 V4.6 H15.8Z" fill="#c9c9c9"/><rect x="0" y="2.6" width="10" height="3.6" fill="#e8150c"/><path d="M8.8 6.4 Q9.8 9 7.4 12.6 Q6.4 14 5.8 13.2 Q5.6 12 8.4 11 Q11.6 10 13.4 10.8 Q14 11.6 12.8 11.8 Q10.6 11.6 9 9 Q8 7 8.8 6.4Z" fill="none" stroke="#e8150c" stroke-width=".9"/></svg><span class="t" style="left:175.20px;top:88.84px;font-size:12px;color:#7a7a7a;font-style:italic;transform:scaleX(0.9522);transform-origin:0 0;">c5BC.pdf</span><svg style="left:67.79999999999995px;top:152.59999999999997px;" width="11" height="11" viewBox="0 0 11 11"><path d="M0 0 L10.5 5 L0 10Z" fill="#7c7c7c"/></svg><svg style="left:95.79999999999995px;top:126.59999999999995px;" width="49" height="65" viewBox="0 0 49 65"><path d="M10 2.2 H30.6 L46.2 17.8 V54.6 Q46.2 62.4 38.4 62.4 H10 Q2.2 62.4 2.2 54.6 V10 Q2.2 2.2 10 2.2Z" fill="none" stroke="#f0f0f0" stroke-width="4.4"/><path d="M30.2 2.2 V12 Q30.2 18 36.2 18 H46.2Z" fill="#f0f0f0"/><g stroke="#f0f0f0" stroke-width="4.4" stroke-linecap="round"><path d="M14.2 30.4 H34 M14.2 38.4 H34 M14.2 46.4 H22"/></g></svg><span class="t" style="left:156.60px;top:142.95px;font-size:14px;color:#a2a2a2;letter-spacing:0.226px;">Document (5)</span><svg style="left:156px;top:160.79999999999995px;" width="17" height="16" viewBox="0 0 17 16"><path d="M2 .4 H11.4 L15.8 4.6 V15.6 H2Z" fill="#f4f4f4" stroke="#cfcfcf" stroke-width=".5"/><path d="M11.4 .4 V4.6 H15.8Z" fill="#c9c9c9"/><rect x="0" y="2.6" width="10" height="3.6" fill="#e8150c"/><path d="M8.8 6.4 Q9.8 9 7.4 12.6 Q6.4 14 5.8 13.2 Q5.6 12 8.4 11 Q11.6 10 13.4 10.8 Q14 11.6 12.8 11.8 Q10.6 11.6 9 9 Q8 7 8.8 6.4Z" fill="none" stroke="#e8150c" stroke-width=".9"/></svg><span class="t" style="left:175.20px;top:163.84px;font-size:12px;color:#7a7a7a;font-style:italic;letter-spacing:0.324px;">9.pdf</span><svg style="left:67.79999999999995px;top:227.59999999999997px;" width="11" height="11" viewBox="0 0 11 11"><path d="M0 0 L10.5 5 L0 10Z" fill="#7c7c7c"/></svg><svg style="left:95.79999999999995px;top:201.59999999999997px;" width="49" height="65" viewBox="0 0 49 65"><path d="M10 2.2 H30.6 L46.2 17.8 V54.6 Q46.2 62.4 38.4 62.4 H10 Q2.2 62.4 2.2 54.6 V10 Q2.2 2.2 10 2.2Z" fill="none" stroke="#f0f0f0" stroke-width="4.4"/><path d="M30.2 2.2 V12 Q30.2 18 36.2 18 H46.2Z" fill="#f0f0f0"/><g stroke="#f0f0f0" stroke-width="4.4" stroke-linecap="round"><path d="M14.2 30.4 H34 M14.2 38.4 H34 M14.2 46.4 H22"/></g></svg><span class="t" style="left:156.60px;top:217.95px;font-size:14px;color:#a2a2a2;letter-spacing:0.226px;">Document (6)</span><svg style="left:156px;top:235.79999999999995px;" width="17" height="16" viewBox="0 0 17 16"><path d="M2 .4 H11.4 L15.8 4.6 V15.6 H2Z" fill="#f4f4f4" stroke="#cfcfcf" stroke-width=".5"/><path d="M11.4 .4 V4.6 H15.8Z" fill="#c9c9c9"/><rect x="0" y="2.6" width="10" height="3.6" fill="#e8150c"/><path d="M8.8 6.4 Q9.8 9 7.4 12.6 Q6.4 14 5.8 13.2 Q5.6 12 8.4 11 Q11.6 10 13.4 10.8 Q14 11.6 12.8 11.8 Q10.6 11.6 9 9 Q8 7 8.8 6.4Z" fill="none" stroke="#e8150c" stroke-width=".9"/></svg><span class="t" style="left:175.20px;top:238.84px;font-size:12px;color:#7a7a7a;font-style:italic;letter-spacing:0.324px;">8.pdf</span><div style="left:83.29999999999995px;top:272px;width:394.7px;height:73.4px;background:#2d2d2d;border:1px solid #1fa3af;border-radius:4px"></div><svg style="left:67.79999999999995px;top:302.59999999999997px;" width="11" height="11" viewBox="0 0 11 11"><path d="M0 0 L10.5 5 L0 10Z" fill="#7c7c7c"/></svg><svg style="left:95.79999999999995px;top:276.59999999999997px;" width="49" height="65" viewBox="0 0 49 65"><path d="M10 2.2 H30.6 L46.2 17.8 V54.6 Q46.2 62.4 38.4 62.4 H10 Q2.2 62.4 2.2 54.6 V10 Q2.2 2.2 10 2.2Z" fill="none" stroke="#f0f0f0" stroke-width="4.4"/><path d="M30.2 2.2 V12 Q30.2 18 36.2 18 H46.2Z" fill="#f0f0f0"/><g stroke="#f0f0f0" stroke-width="4.4" stroke-linecap="round"><path d="M14.2 30.4 H34 M14.2 38.4 H34 M14.2 46.4 H22"/></g></svg><span class="t" style="left:156.60px;top:292.95px;font-size:14px;color:#ffffff;letter-spacing:0.226px;text-shadow:0 0 .6px #fff;">Document (7)</span><svg style="left:156px;top:310.79999999999995px;" width="17" height="16" viewBox="0 0 17 16"><path d="M2 .4 H11.4 L15.8 4.6 V15.6 H2Z" fill="#f4f4f4" stroke="#cfcfcf" stroke-width=".5"/><path d="M11.4 .4 V4.6 H15.8Z" fill="#c9c9c9"/><rect x="0" y="2.6" width="10" height="3.6" fill="#e8150c"/><path d="M8.8 6.4 Q9.8 9 7.4 12.6 Q6.4 14 5.8 13.2 Q5.6 12 8.4 11 Q11.6 10 13.4 10.8 Q14 11.6 12.8 11.8 Q10.6 11.6 9 9 Q8 7 8.8 6.4Z" fill="none" stroke="#e8150c" stroke-width=".9"/></svg><span class="t" style="left:175.20px;top:313.84px;font-size:12px;color:#f2f2f2;font-weight:700;font-style:italic;transform:scaleX(0.9766);transform-origin:0 0;">7.pdf</span><svg style="left:67.79999999999995px;top:377.59999999999997px;" width="11" height="11" viewBox="0 0 11 11"><path d="M0 0 L10.5 5 L0 10Z" fill="#7c7c7c"/></svg><svg style="left:95.79999999999995px;top:351.59999999999997px;" width="49" height="65" viewBox="0 0 49 65"><path d="M10 2.2 H30.6 L46.2 17.8 V54.6 Q46.2 62.4 38.4 62.4 H10 Q2.2 62.4 2.2 54.6 V10 Q2.2 2.2 10 2.2Z" fill="none" stroke="#f0f0f0" stroke-width="4.4"/><path d="M30.2 2.2 V12 Q30.2 18 36.2 18 H46.2Z" fill="#f0f0f0"/><g stroke="#f0f0f0" stroke-width="4.4" stroke-linecap="round"><path d="M14.2 30.4 H34 M14.2 38.4 H34 M14.2 46.4 H22"/></g></svg><span class="t" style="left:156.60px;top:367.95px;font-size:14px;color:#a2a2a2;letter-spacing:0.226px;">Document (8)</span><svg style="left:156px;top:385.79999999999995px;" width="17" height="16" viewBox="0 0 17 16"><path d="M2 .4 H11.4 L15.8 4.6 V15.6 H2Z" fill="#f4f4f4" stroke="#cfcfcf" stroke-width=".5"/><path d="M11.4 .4 V4.6 H15.8Z" fill="#c9c9c9"/><rect x="0" y="2.6" width="10" height="3.6" fill="#e8150c"/><path d="M8.8 6.4 Q9.8 9 7.4 12.6 Q6.4 14 5.8 13.2 Q5.6 12 8.4 11 Q11.6 10 13.4 10.8 Q14 11.6 12.8 11.8 Q10.6 11.6 9 9 Q8 7 8.8 6.4Z" fill="none" stroke="#e8150c" stroke-width=".9"/></svg><span class="t" style="left:175.20px;top:388.84px;font-size:12px;color:#7a7a7a;font-style:italic;letter-spacing:0.324px;">1.pdf</span><svg style="left:67.79999999999995px;top:452.59999999999997px;" width="11" height="11" viewBox="0 0 11 11"><path d="M0 0 L10.5 5 L0 10Z" fill="#7c7c7c"/></svg><svg style="left:95.79999999999995px;top:426.59999999999997px;" width="49" height="65" viewBox="0 0 49 65"><path d="M10 2.2 H30.6 L46.2 17.8 V54.6 Q46.2 62.4 38.4 62.4 H10 Q2.2 62.4 2.2 54.6 V10 Q2.2 2.2 10 2.2Z" fill="none" stroke="#f0f0f0" stroke-width="4.4"/><path d="M30.2 2.2 V12 Q30.2 18 36.2 18 H46.2Z" fill="#f0f0f0"/><g stroke="#f0f0f0" stroke-width="4.4" stroke-linecap="round"><path d="M14.2 30.4 H34 M14.2 38.4 H34 M14.2 46.4 H22"/></g></svg><span class="t" style="left:156.60px;top:442.95px;font-size:14px;color:#a2a2a2;letter-spacing:0.226px;">Document (9)</span><svg style="left:156px;top:460.79999999999995px;" width="17" height="16" viewBox="0 0 17 16"><path d="M2 .4 H11.4 L15.8 4.6 V15.6 H2Z" fill="#f4f4f4" stroke="#cfcfcf" stroke-width=".5"/><path d="M11.4 .4 V4.6 H15.8Z" fill="#c9c9c9"/><rect x="0" y="2.6" width="10" height="3.6" fill="#e8150c"/><path d="M8.8 6.4 Q9.8 9 7.4 12.6 Q6.4 14 5.8 13.2 Q5.6 12 8.4 11 Q11.6 10 13.4 10.8 Q14 11.6 12.8 11.8 Q10.6 11.6 9 9 Q8 7 8.8 6.4Z" fill="none" stroke="#e8150c" stroke-width=".9"/></svg><span class="t" style="left:175.20px;top:463.84px;font-size:12px;color:#7a7a7a;font-style:italic;letter-spacing:0.007px;">Bad Name.pdf</span></div>
<div style="left:980px;top:757px;width:8px;height:199px;background:#1c4e55;border-radius:4px"></div>
<div style="left:994.4px;top:88.7px;width:909.4px;height:682px;background:#252525;background-image:linear-gradient(#2a2a2a 1px,transparent 1px),linear-gradient(90deg,#2a2a2a 1px,transparent 1px);background-size:5px 5px"></div>
<div style="left:1894px;top:131.7px;width:10px;height:639px;background:#262626;"></div>
<svg style="left:1011px;top:101px;" width="22" height="18" viewBox="0 0 22 18"><path d="M2 1 V17 M20 1 V17" stroke="#b0b0b0" stroke-width="2.3"/><path d="M5.4 9 H16.6" stroke="#b0b0b0" stroke-width="2.2"/><path d="M4 9 L8.2 4.8 L9.6 6.2 L6.8 9 L9.6 11.8 L8.2 13.2Z M18 9 L13.8 4.8 L12.4 6.2 L15.2 9 L12.4 11.8 L13.8 13.2Z" fill="#b0b0b0"/></svg>
<svg style="left:1041px;top:100.8px;" width="19" height="19" viewBox="0 0 19 19"><rect x="0" y="0" width="2.2" height="2.2" fill="#b0b0b0"/><rect x="0" y="4" width="2.2" height="2.2" fill="#b0b0b0"/><rect x="0" y="8" width="2.2" height="2.2" fill="#b0b0b0"/><rect x="0" y="12" width="2.2" height="2.2" fill="#b0b0b0"/><rect x="0" y="16" width="2.2" height="2.2" fill="#b0b0b0"/><rect x="4.2" y="0" width="2.2" height="2.2" fill="#b0b0b0"/><rect x="4.2" y="16" width="2.2" height="2.2" fill="#b0b0b0"/><rect x="8.4" y="0" width="2.2" height="2.2" fill="#b0b0b0"/><rect x="8.4" y="16" width="2.2" height="2.2" fill="#b0b0b0"/><rect x="12.6" y="0" width="2.2" height="2.2" fill="#b0b0b0"/><rect x="12.6" y="16" width="2.2" height="2.2" fill="#b0b0b0"/><rect x="16.8" y="0" width="2.2" height="2.2" fill="#b0b0b0"/><rect x="16.8" y="4" width="2.2" height="2.2" fill="#b0b0b0"/><rect x="16.8" y="8" width="2.2" height="2.2" fill="#b0b0b0"/><rect x="16.8" y="12" width="2.2" height="2.2" fill="#b0b0b0"/><rect x="16.8" y="16" width="2.2" height="2.2" fill="#b0b0b0"/><rect x="5.2" y="5.2" width="8.6" height="8" fill="none" stroke="#b0b0b0" stroke-width="2.2"/></svg>
<svg style="left:1069px;top:99.6px;" width="19" height="21" viewBox="0 0 19 21"><rect x="4.8" y=".3" width="13.4" height="16.2" rx="2.2" fill="#b0b0b0"/><path d="M1.7 4.6 V19.2 H14" fill="none" stroke="#b0b0b0" stroke-width="2.2"/></svg>
<svg style="left:1363px;top:105px;" width="14" height="12" viewBox="0 0 14 12"><rect x="0" y="0" width="2.4" height="12" fill="#6c6c6c"/><path d="M13.2 0 V12 L4.6 6Z" fill="#6c6c6c"/></svg>
<svg style="left:1394px;top:105px;" width="9" height="12" viewBox="0 0 9 12"><path d="M7.4 .6 L1.6 6 L7.4 11.4" fill="none" stroke="#6c6c6c" stroke-width="2"/></svg>
<div style="left:1428.2px;top:97px;width:25.8px;height:25px;border:1px solid #4a4a4a;border-radius:5px"></div>
<span class="t" style="left:1437.40px;top:103.47px;font-size:13.5px;color:#b0b0b0;">1</span>
<span class="t" style="left:1457.80px;top:103.47px;font-size:13.5px;color:#b0b0b0;letter-spacing:0.692px;">/ 5</span>
<svg style="left:1494.4px;top:105px;" width="9" height="12" viewBox="0 0 9 12"><path d="M1.2 .6 L7 6 L1.2 11.4" fill="none" stroke="#b0b0b0" stroke-width="2"/></svg>
<svg style="left:1520.8px;top:105px;" width="15" height="12" viewBox="0 0 15 12"><path d="M0 0 V12 L9.2 6Z" fill="#b0b0b0"/><rect x="11.3" y="0" width="2.8" height="12" fill="#b0b0b0"/></svg>
<svg style="left:1790px;top:100.8px;" width="21" height="19" viewBox="0 0 21 19"><rect x="4.2" y="0" width="12.8" height="4" fill="#b0b0b0"/><path d="M2.4 5.2 H18.6 Q21 5.2 21 7.6 V14.2 H0 V7.6 Q0 5.2 2.4 5.2Z" fill="#b0b0b0"/><rect x="4.2" y="11.4" width="12.8" height="6.8" fill="#b0b0b0"/><rect x="6.8" y="12.8" width="7.6" height="3.4" fill="#242424"/><circle cx="16.6" cy="8.6" r="1" fill="#242424"/></svg>
<svg style="left:1818.8px;top:99.6px;" width="21" height="21" viewBox="0 0 21 21"><circle cx="10.3" cy="10.3" r="10.2" fill="#b0b0b0"/><rect x="9.2" y="5" width="2.2" height="2.2" fill="#555"/><rect x="9.2" y="8.8" width="2.2" height="6.6" fill="#555"/></svg>
<div style="left:1848.9px;top:101px;width:1.4px;height:16.8px;background:#565656;"></div>
<div style="left:1859.4px;top:99px;width:28.6px;height:19.4px;background:#2d2d2d;border-radius:4px"></div>
<svg style="left:1860px;top:102px;" width="16" height="16" viewBox="0 0 16 16"><path d="M0 0 H3 L4 1.2 H7 V2.4 H2 L0 6.6Z" fill="#e9a93a"/><path d="M2 2.6 H8.4 L6.6 7 H0Z" fill="#fbd870" stroke="#d9982a" stroke-width=".5"/><path d="M4.2 7 V12.8 H9 M6 5.2 H9.4" stroke="#b8b8b8" stroke-width=".9" fill="none"/><path d="M9.4 1.2 H13 L14.8 3 V7.4 H9.4Z M9.4 9.4 H13 L14.8 11.2 V15.6 H9.4Z" fill="#fafafa"/></svg>
<svg style="left:1878px;top:106px;" width="9" height="8" viewBox="0 0 9 8"><path d="M0 0 H8.4 L4.2 7.4Z" fill="#7c7c7c"/></svg>
<div style="left:994.6px;top:131.7px;width:899.4px;height:638.7px;background:#fff;"></div>
<span class="t" style="left:1057.00px;top:138.74px;font-size:13.3px;color:#262626;font-weight:700;letter-spacing:0.422px;">Prepayment Penalty</span><span class="t" style="left:1438.80px;top:139.62px;font-size:12.5px;color:#262626;transform:scaleX(0.9394);transform-origin:0 0;">YES</span><span class="t" style="left:1508.30px;top:138.56px;font-size:8.2px;color:#3c3c3c;letter-spacing:0.269px;">• As high as $4,789.07 if you pay off the loan during the first 5 years</span><div style="left:1048.2px;top:161px;width:793.2px;height:1.2px;background:#6a6a6a;"></div><span class="t" style="left:1057.00px;top:170.24px;font-size:13.3px;color:#262626;font-weight:700;letter-spacing:0.359px;">Balloon Payment</span><span class="t" style="left:1438.80px;top:170.72px;font-size:12.5px;color:#262626;transform:scaleX(0.9394);transform-origin:0 0;">YES</span><div style="left:1048.2px;top:191.6px;width:793.2px;height:1.4px;background:#2a2a2a;"></div><div style="left:1258.8px;top:131.7px;width:1.6px;height:60px;background:#8e8e8e;"></div><div style="left:1048.2px;top:214.1px;width:211.89999999999986px;height:27.4px;background:#212121;border-radius:9px 9px 0 0"></div><span class="t" style="left:1057.50px;top:222.93px;font-size:15.2px;color:#fff;font-weight:700;letter-spacing:0.195px;">Projected Payments</span><div style="left:1048.2px;top:240.6px;width:793.2px;height:31px;background:#e6e6e6;"></div><div style="left:1258.6px;top:239.8px;width:582.8000000000002px;height:1.6px;background:#9a9a9a;"></div><div style="left:1048.2px;top:270.8px;width:793.2px;height:1.4px;background:#a4a4a4;"></div><span class="t" style="left:1057.50px;top:250.94px;font-size:13.3px;color:#262626;font-weight:700;letter-spacing:0.167px;">Payment Calculation</span><span class="t" style="left:1321.30px;top:248.61px;font-size:17px;color:#262626;font-weight:700;letter-spacing:0.123px;">1-10</span><span class="t" style="left:1450.30px;top:248.61px;font-size:17px;color:#262626;font-weight:700;letter-spacing:0.463px;">11-20</span><span class="t" style="left:1576.50px;top:248.61px;font-size:17px;color:#262626;font-weight:700;letter-spacing:0.254px;">21-30</span><span class="t" style="left:1726.00px;top:248.61px;font-size:17px;color:#262626;font-weight:700;letter-spacing:0.254px;">31-40</span><div style="left:1258.8px;top:240px;width:1.6px;height:321.5px;background:#8e8e8e;"></div><span class="t" style="left:1066.20px;top:293.86px;font-size:13.4px;color:#303030;letter-spacing:0.085px;">Principal &amp; Interest</span><span class="t" style="left:1331.10px;top:293.73px;font-size:14.5px;color:#303030;letter-spacing:-0.065px;">$ 686.61</span><span class="t" style="left:1464.50px;top:293.73px;font-size:14.5px;color:#303030;letter-spacing:-0.05px;">$ 938.87</span><span class="t" style="left:1578.00px;top:293.73px;font-size:14.5px;color:#303030;letter-spacing:0.006px;">$ 1,241.24</span><span class="t" style="left:1721.50px;top:293.73px;font-size:14.5px;color:#303030;letter-spacing:0.073px;">$ 1,262.10</span><span class="t" style="left:1336.00px;top:312.82px;font-size:8.6px;color:#262626;font-weight:700;font-style:italic;letter-spacing:0.141px;">only interest</span><span class="t" style="left:1066.20px;top:331.86px;font-size:13.4px;color:#303030;letter-spacing:0.235px;">Mortgage Insurance</span><span class="t" style="left:1301.20px;top:332.33px;font-size:14.5px;color:#303030;">+</span><span class="t" style="left:1343.40px;top:332.43px;font-size:14.5px;color:#303030;letter-spacing:-0.132px;">215.54</span><span class="t" style="left:1433.80px;top:332.33px;font-size:14.5px;color:#303030;">+</span><span class="t" style="left:1477.40px;top:332.43px;font-size:14.5px;color:#303030;letter-spacing:-0.092px;">134.73</span><span class="t" style="left:1560.00px;top:332.33px;font-size:14.5px;color:#303030;">+</span><span class="t" style="left:1618.50px;top:332.43px;font-size:14.5px;color:#303030;letter-spacing:0.155px;">0.00</span><span class="t" style="left:1703.40px;top:332.33px;font-size:14.5px;color:#303030;">+</span><span class="t" style="left:1750.80px;top:332.43px;font-size:14.5px;color:#303030;letter-spacing:0.094px;">$ 0.00</span><span class="t" style="left:1066.20px;top:359.86px;font-size:13.4px;color:#303030;letter-spacing:-0.038px;">Estimated Escrow</span><span class="t" style="left:1066.20px;top:375.49px;font-size:12.3px;color:#303030;font-style:italic;transform:scaleX(0.981);transform-origin:0 0;">Amount can increase over time</span><span class="t" style="left:1301.20px;top:360.13px;font-size:14.5px;color:#303030;">+</span><span class="t" style="left:1344.60px;top:360.23px;font-size:14.5px;color:#303030;transform:scaleX(0.9694);transform-origin:0 0;">198.68</span><span class="t" style="left:1433.80px;top:360.13px;font-size:14.5px;color:#303030;">+</span><span class="t" style="left:1476.60px;top:360.23px;font-size:14.5px;color:#303030;letter-spacing:0.008px;">205.36</span><span class="t" style="left:1560.00px;top:360.13px;font-size:14.5px;color:#303030;">+</span><span class="t" style="left:1602.60px;top:360.23px;font-size:14.5px;color:#303030;letter-spacing:0.008px;">234.70</span><span class="t" style="left:1703.40px;top:360.13px;font-size:14.5px;color:#303030;">+</span><span class="t" style="left:1746.10px;top:360.23px;font-size:14.5px;color:#303030;letter-spacing:0.008px;">204.50</span><div style="left:1048.2px;top:393.8px;width:793.2px;height:1.2px;background:#a0a0a0;"></div><span class="t" style="left:1066.20px;top:402.84px;font-size:13.3px;color:#262626;font-weight:700;letter-spacing:0.141px;">Estimated Total</span><span class="t" style="left:1066.20px;top:417.54px;font-size:13.3px;color:#262626;font-weight:700;letter-spacing:0.408px;">Monthly Payment</span><span class="t" style="left:1309.00px;top:408.59px;font-size:17.5px;color:#303030;letter-spacing:0.009px;">$ 1,100.83</span><span class="t" style="left:1438.50px;top:408.59px;font-size:17.5px;color:#303030;letter-spacing:-0.024px;">$ 1,278.96</span><span class="t" style="left:1564.40px;top:408.59px;font-size:17.5px;color:#303030;letter-spacing:-0.013px;">$ 1,475.94</span><span class="t" style="left:1708.70px;top:408.59px;font-size:17.5px;color:#303030;letter-spacing:-0.002px;">$ 1,466.60</span><div style="left:1048.2px;top:436.6px;width:793.2px;height:2.8px;background:#1e1e1e;"></div><span class="t" style="left:1057.50px;top:468.14px;font-size:13.3px;color:#262626;font-weight:700;letter-spacing:0.001px;">Estimated Taxes, Insurance</span><span class="t" style="left:1057.50px;top:482.14px;font-size:13.3px;color:#262626;font-weight:700;transform:scaleX(0.9711);transform-origin:0 0;">&amp; Assessments</span><span class="t" style="left:1057.50px;top:502.59px;font-size:12.3px;color:#303030;font-style:italic;transform:scaleX(0.9799);transform-origin:0 0;">Amount can increase over time</span><span class="t" style="left:1057.50px;top:521.49px;font-size:12.3px;color:#303030;font-style:italic;transform:scaleX(0.9478);transform-origin:0 0;">See page 4 for details</span><span class="t" style="left:1293.00px;top:480.59px;font-size:17.5px;color:#303030;letter-spacing:-0.104px;">$ 392.83</span><span class="t" style="left:1293.60px;top:507.83px;font-size:16.5px;color:#303030;letter-spacing:0.413px;">a month</span><span class="t" style="left:1418.40px;top:448.44px;font-size:13.3px;color:#262626;font-weight:700;letter-spacing:0.046px;">This estimate includes</span><span class="t" style="left:1695.80px;top:448.44px;font-size:13.3px;color:#262626;font-weight:700;transform:scaleX(0.9673);transform-origin:0 0;">In escrow?</span><div style="left:1413.4px;top:463.2px;width:22px;height:57px;background:#ffffd9;border:1px solid #cfcfb4"></div><div style="left:1418.2px;top:469.4px;width:11.8px;height:12px;background:#fbd0c3;border:1px solid #cf8f84"></div><div style="left:1418.2px;top:487.4px;width:11.8px;height:12px;background:#8fe68f;border:1.4px solid #3f9f3f"></div><div style="left:1422.3px;top:491.59999999999997px;width:3.6px;height:3.6px;background:#234a23;"></div><div style="left:1418.2px;top:505px;width:11.8px;height:12px;background:#8fe68f;border:1.4px solid #3f9f3f"></div><div style="left:1422.3px;top:509.2px;width:3.6px;height:3.6px;background:#234a23;"></div><span class="t" style="left:1433.00px;top:469.46px;font-size:13.4px;color:#303030;letter-spacing:-0.06px;">Property Taxes</span><span class="t" style="left:1433.00px;top:487.66px;font-size:13.4px;color:#303030;letter-spacing:0.122px;">Homeowner’s Insurance</span><span class="t" style="left:1433.00px;top:505.26px;font-size:13.4px;color:#303030;letter-spacing:0.316px;">Other:</span><span class="t" style="left:1668.10px;top:468.53px;font-size:14.5px;color:#262626;font-weight:700;letter-spacing:-0.008px;">YES</span><span class="t" style="left:1668.10px;top:486.13px;font-size:14.5px;color:#262626;font-weight:700;letter-spacing:-0.008px;">YES</span><span class="t" style="left:1668.10px;top:503.73px;font-size:14.5px;color:#262626;font-weight:700;letter-spacing:-0.05px;">NO</span><div style="left:1048.2px;top:561px;width:793.2px;height:1.2px;background:#8c8c8c;"></div><div style="left:1049.0px;top:584.8px;width:212.39999999999986px;height:27px;background:#212121;border-radius:9px 9px 0 0"></div><span class="t" style="left:1058.60px;top:593.73px;font-size:15.2px;color:#fff;font-weight:700;transform:scaleX(0.9797);transform-origin:0 0;">Costs at Closing</span><div style="left:1258.6px;top:611px;width:582.8000000000002px;height:1.4px;background:#9a9a9a;"></div><span class="t" style="left:1058.20px;top:625.54px;font-size:13.3px;color:#262626;font-weight:700;letter-spacing:0.117px;">Closing Costs</span><span class="t" style="left:1292.60px;top:623.53px;font-size:14.5px;color:#303030;letter-spacing:0.049px;">$ 52,715.53</span><div style="left:1049.0px;top:663.4px;width:792.4000000000001px;height:1.4px;background:#9a9a9a;"></div><span class="t" style="left:1058.20px;top:677.24px;font-size:13.3px;color:#262626;font-weight:700;letter-spacing:0.119px;">Cash to Close</span><span class="t" style="left:1284.50px;top:677.53px;font-size:14.5px;color:#303030;letter-spacing:0.048px;">$ 183,037.38</span><div style="left:1049.0px;top:716.2px;width:792.4000000000001px;height:1.4px;background:#9a9a9a;"></div><div style="left:1260.0px;top:611px;width:1.6px;height:106px;background:#9a9a9a;"></div><span class="t" style="left:1050.60px;top:734.83px;font-size:10.6px;color:#303030;transform:scaleX(0.9472);transform-origin:0 0;">CLOSING DISCLOSURE</span><span class="t" style="left:1655.90px;top:734.73px;font-size:10.6px;color:#303030;transform:scaleX(0.9768);transform-origin:0 0;">PAGE 1 OF 5 • LOAN ID #</span>
<div style="left:1896px;top:421px;width:8px;height:350px;background:#1c4e55;border-radius:4px"></div>
<div style="left:994.4px;top:777.2px;width:909.4px;height:286.8px;background:#232323;"></div>
<span class="t" style="left:1009.40px;top:788.15px;font-size:14px;color:#8c8c8c;letter-spacing:0.269px;">1 results in 9 ms.</span>
<svg style="left:1869.8px;top:788px;" width="13" height="20" viewBox="0 0 13 20"><g fill="#b8b8b8"><rect x="0" y="0" width="12.4" height="2.2"/><path d="M0 3.8 H12.4 L10.6 8 V19.6 H1.8 V8Z"/></g><rect x="5.2" y="11" width="2" height="2.4" fill="#232323"/></svg>
<div style="left:994.4px;top:817.4px;width:909.4px;height:1px;background:#303030;"></div>
<span class="t" style="left:1006.50px;top:834.65px;font-size:14px;color:#c2c2c2;font-weight:700;letter-spacing:0.527px;">Value</span>
<span class="t" style="left:1305.80px;top:834.65px;font-size:14px;color:#c2c2c2;font-weight:700;letter-spacing:0.031px;">Page No</span>
<span class="t" style="left:1405.30px;top:834.65px;font-size:14px;color:#c2c2c2;font-weight:700;letter-spacing:-0.078px;">Span</span>
<span class="t" style="left:1605.80px;top:834.65px;font-size:14px;color:#c2c2c2;font-weight:700;letter-spacing:0.174px;">Confidence</span>
<span class="t" style="left:1705.50px;top:834.65px;font-size:14px;color:#c2c2c2;font-weight:700;letter-spacing:-0.014px;">Source</span>
<div style="left:1002px;top:857.8px;width:894px;height:28.8px;background:#2e2e2e;border:1px solid #a8a8a8;border-right:none;border-radius:5px 0 0 5px"></div>
<span class="t" style="left:1006.50px;top:865.85px;font-size:14px;color:#ececec;letter-spacing:0.406px;">Homeowner&#x27;s Insurance Other</span>
<span class="t" style="left:1305.80px;top:865.85px;font-size:14px;color:#ececec;">1</span>
<span class="t" style="left:1405.30px;top:865.85px;font-size:14px;color:#ececec;letter-spacing:0.207px;">0–1 (0)</span>
<span class="t" style="left:1605.80px;top:865.85px;font-size:14px;color:#ececec;transform:scaleX(0.9689);transform-origin:0 0;">100%</span>
<div style="left:1002px;top:1047.4px;width:889px;height:8.4px;background:#1c4e55;border-radius:4.2px"></div>
<svg style="left:0;top:0" width="1920" height="1080" viewBox="0 0 1920 1080"><defs><filter id="cs" x="-20%" y="-20%" width="140%" height="150%"><feDropShadow dx="2.2" dy="3.2" stdDeviation="1.8" flood-color="#000" flood-opacity=".6"/></filter></defs><g filter="url(#cs)"><path d="M437.7 415.6 L503.5 351.1 L508.7 356.5 L524.6 327.0 L494.7 342.3 L500.0 347.6 L434.3 412.0Z" fill="#f7941e"/><circle cx="436" cy="413.8" r="19.3" fill="#f7941e"/></g><text x="435.8" y="422.0" text-anchor="middle" font-family="Liberation Sans" font-weight="700" font-size="23.5" fill="#fff">6</text><g filter="url(#cs)"><path d="M394.8 176.2 L487.4 176.2 L487.4 183.8 L519.4 173.8 L487.4 163.8 L487.4 171.4 L394.8 171.4Z" fill="#f7941e"/><circle cx="394.8" cy="173.8" r="19.3" fill="#f7941e"/></g><text x="394.6" y="182.0" text-anchor="middle" font-family="Liberation Sans" font-weight="700" font-size="23.5" fill="#fff">4</text><g filter="url(#cs)"><path d="M397.8 287.3 L490.9 287.3 L490.9 294.9 L522.9 284.9 L490.9 274.9 L490.9 282.4 L397.8 282.4Z" fill="#f7941e"/><circle cx="397.8" cy="284.9" r="19.3" fill="#f7941e"/></g><text x="397.6" y="293.09999999999997" text-anchor="middle" font-family="Liberation Sans" font-weight="700" font-size="23.5" fill="#fff">5</text><g filter="url(#cs)"><path d="M1288.7 496.2 L1380.6 496.5 L1380.6 504.0 L1412.6 494.1 L1380.6 484.0 L1380.6 491.6 L1288.7 491.4Z" fill="#f7941e"/><circle cx="1288.7" cy="493.8" r="19.4" fill="#f7941e"/></g><text x="1288.5" y="502.0" text-anchor="middle" font-family="Liberation Sans" font-weight="700" font-size="23.5" fill="#fff">3</text></svg>
</div>
</body>
</html>
